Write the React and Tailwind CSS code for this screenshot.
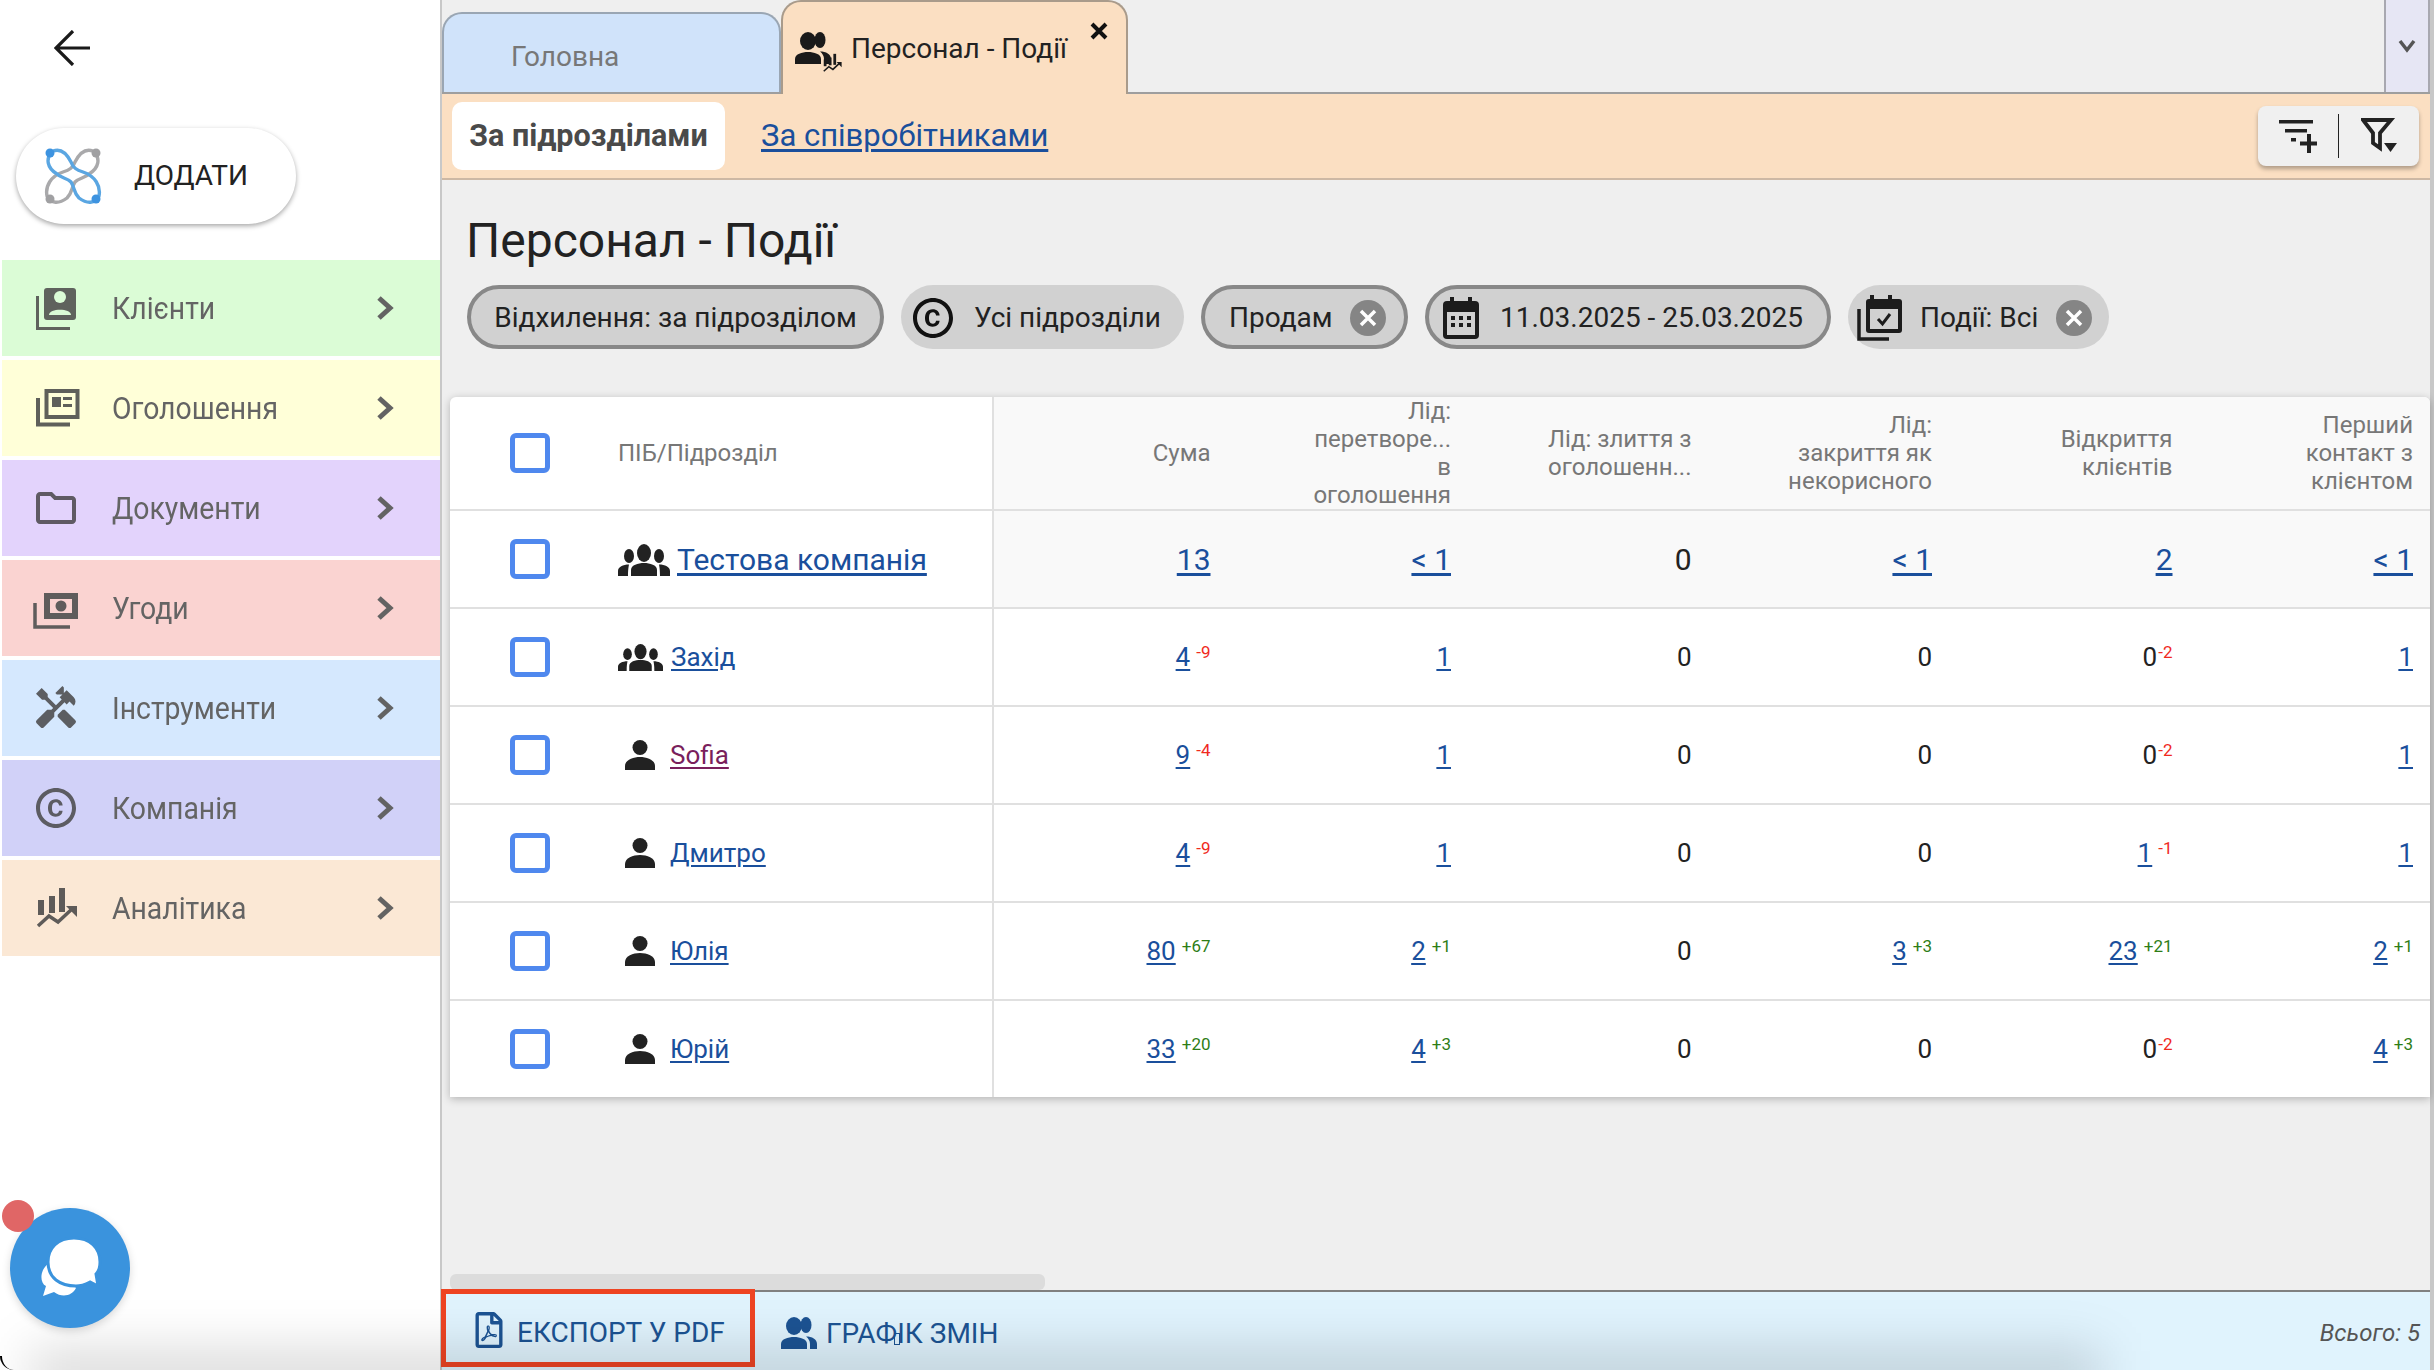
import React from "react";
import { MdOutlineFolder, MdHandyman, MdOutlineCopyright } from "react-icons/md";
import { FaRegFilePdf } from "react-icons/fa";

const Chevron = () => (
  <svg width="18" height="26" viewBox="0 0 18 26" className="shrink-0">
    <polyline points="3,3 14,13 3,23" fill="none" stroke="#636363" strokeWidth="5" />
  </svg>
);
const ClientsIcon = () => (
  <svg width="48" height="48" viewBox="0 0 48 48">
    <path d="M5.5 12 V44.5 H38" fill="none" stroke="#5f625d" strokeWidth="3" />
    <rect x="12" y="4" width="32" height="32" rx="3" fill="#5f625d" />
    <circle cx="28" cy="13" r="6" fill="#dbfcd6" />
    <path d="M17 31 C17 24 39 24 39 31 Z" fill="#dbfcd6" />
  </svg>
);
const AdsIcon = () => (
  <svg width="48" height="48" viewBox="0 0 48 48">
    <path d="M6 14 V40.5 H38" fill="none" stroke="#5f605a" strokeWidth="4" />
    <rect x="14.5" y="7" width="31" height="26" fill="none" stroke="#5f605a" strokeWidth="4" />
    <rect x="20" y="13" width="9" height="10" fill="#5f605a" />
    <rect x="31" y="13" width="9" height="3" fill="#5f605a" />
    <rect x="31" y="20" width="9" height="3" fill="#5f605a" />
  </svg>
);
const MoneyIcon = () => (
  <svg width="48" height="48" viewBox="0 0 48 48">
    <path d="M3 19 V43 H38" fill="none" stroke="#5f5c5c" strokeWidth="3.5" />
    <rect x="12" y="9" width="34" height="26" fill="#5f5c5c" />
    <path d="M18 15 H40 V29 H18 Z" fill="#fad3d1" />
    <circle cx="29" cy="22" r="5.5" fill="#5f5c5c" />
  </svg>
);
const ChartIcon = ({ size = 48, color = "#5e5b59" }) => (
  <svg width={size} height={size} viewBox="0 0 48 48">
    <rect x="6" y="16" width="6" height="15" fill={color} />
    <rect x="17" y="12" width="6" height="17" fill={color} />
    <rect x="27" y="4" width="6" height="24" fill={color} />
    <path d="M6 42 L17 32 L26 38 L40 25" fill="none" stroke={color} strokeWidth="3.5" />
    <path d="M34 22 H45 V33 Z" fill={color} />
  </svg>
);
const Person = ({ color = "#222", className = "" }) => (
  <svg width="30" height="30" viewBox="0 0 30 30" className={className}>
    <ellipse cx="15" cy="7.5" rx="7.5" ry="7.5" fill={color} />
    <path d="M0 30 V26 C0 20 8 17 15 17 C22 17 30 20 30 26 V30 Z" fill={color} />
  </svg>
);
const Group = ({ w, h }) => (
  <svg width={w} height={h} viewBox="0 0 52 32" preserveAspectRatio="none">
    <ellipse cx="26" cy="9" rx="7" ry="9" fill="#222" />
    <ellipse cx="11" cy="12" rx="5" ry="7" fill="#222" />
    <ellipse cx="41" cy="12" rx="5" ry="7" fill="#222" />
    <path d="M13 32 V26 C13 21 20 19 26 19 C32 19 39 21 39 26 V32 Z" fill="#222" />
    <path d="M0 32 V27 C0 23 5 20.5 11 20.5 C10.5 23 10 26 10 32 Z" fill="#222" />
    <path d="M52 32 V27 C52 23 47 20.5 41 20.5 C41.5 23 42 26 42 32 Z" fill="#222" />
  </svg>
);
const TwoPeople = ({ color, w = 36, h = 32 }) => (
  <svg width={w} height={h} viewBox="0 0 36 32">
    <ellipse cx="13" cy="9" rx="8" ry="9" fill={color} />
    <ellipse cx="25" cy="8" rx="5.5" ry="8" fill={color} />
    <path d="M0 32 V27 C0 22 7 20 13 20 C19 20 26 22 26 27 V32 Z" fill={color} />
    <path d="M25 19.5 C31 19.5 36 22 36 27 V32 H29 V27 C29 24 27.5 21.5 25 19.5 Z" fill={color} />
  </svg>
);
const ChipX = () => (
  <svg width="36" height="36" viewBox="0 0 36 36" className="shrink-0">
    <circle cx="18" cy="18" r="18" fill="#858585" />
    <path d="M11 11 L25 25 M25 11 L11 25" stroke="#fff" strokeWidth="3.5" />
  </svg>
);
const Calendar = () => (
  <svg width="38" height="42" viewBox="0 0 38 42" className="shrink-0">
    <rect x="8" y="0" width="4" height="8" fill="#1c1c1c" />
    <rect x="26" y="0" width="4" height="8" fill="#1c1c1c" />
    <rect x="1" y="4" width="36" height="38" rx="4" fill="#1c1c1c" />
    <rect x="5" y="15" width="28" height="23" fill="#d1d1d1" />
    {[9, 17, 25].map((x) => [19, 26].map((y) => <rect key={`${x}${y}`} x={x} y={y} width="4" height="4" fill="#1c1c1c" />))}
  </svg>
);
const CalendarCheck = () => (
  <svg width="46" height="46" viewBox="0 0 46 46" className="shrink-0">
    <path d="M2 14 V44 H32" fill="none" stroke="#1c1c1c" strokeWidth="3.5" />
    <rect x="13" y="0" width="4" height="8" fill="#1c1c1c" />
    <rect x="31" y="0" width="4" height="8" fill="#1c1c1c" />
    <rect x="9" y="4" width="36" height="34" rx="3" fill="#1c1c1c" />
    <rect x="13" y="14" width="28" height="20" fill="#d1d1d1" />
    <path d="M21 24 L25.5 29 L33 19" fill="none" stroke="#1c1c1c" strokeWidth="3" />
  </svg>
);
const Logo = () => (
  <svg width="60" height="60" viewBox="0 0 60 60" className="shrink-0">
    <g fill="none" strokeWidth="3.4">
      <path d="M50 5 C42 2 36 8 32 16 C30 22 26 24 20 26 C8 30 2 40 4 50 C8 58 16 58 24 52 C30 46 28 42 32 36 C36 32 42 32 46 28 C56 22 58 12 50 5" stroke="#a9a9ab" />
      <path d="M10 5 C18 2 24 8 28 16 C30 22 34 24 40 26 C52 30 58 40 56 50 C52 58 44 58 36 52 C30 46 32 42 28 36 C24 32 18 32 14 28 C4 22 2 12 10 5" stroke="#5aa6e2" />
    </g>
    <circle cx="7" cy="7" r="4.5" fill="#3d93e0" />
    <circle cx="53" cy="53" r="4.5" fill="#3d93e0" />
    <circle cx="53" cy="7" r="4.5" fill="#a0a0a2" />
    <circle cx="7" cy="53" r="4.5" fill="#a0a0a2" />
  </svg>
);

const menu = [
  ["Клієнти", "bg-[#dbfcd6]", <ClientsIcon />],
  ["Оголошення", "bg-[#ffffd8]", <AdsIcon />],
  ["Документи", "bg-[#e3d3fc]", <MdOutlineFolder size={48} color="#5f5a63" />],
  ["Угоди", "bg-[#fad3d1]", <MoneyIcon />],
  ["Інструменти", "bg-[#d5e8fe]", <MdHandyman size={48} color="#5c5e62" />],
  ["Компанія", "bg-[#d1d1f8]", <MdOutlineCopyright size={48} color="#5c5c62" />],
  ["Аналітика", "bg-[#fbe8d5]", <ChartIcon />],
];

const Num = ({ v, d, big, link = true, tight }) => (
  <div className={`flex justify-end items-center pr-[17px] ${big ? "text-[30px]" : "text-[26px]"}`}>
    {link ? (
      <a className="text-[#1a4f9c] underline underline-offset-[3px]" href="#">{v}</a>
    ) : (
      <span className="text-[#222]">{v}</span>
    )}
    {d && (
      <span className={`text-[17px] leading-[20px] mb-[11px] ${tight ? "ml-px" : "ml-[6px]"} ${d[0] === "+" ? "text-[#2e7d16]" : "text-[#f02a1e]"}`}>{d}</span>
    )}
  </div>
);

const rows = [
  { name: "Захід", type: "group", c: [["4", "-9"], ["1"], ["0", null, 0], ["0", null, 0], ["0", "-2", 0], ["1"]] },
  { name: "Sofia", visited: true, c: [["9", "-4"], ["1"], ["0", null, 0], ["0", null, 0], ["0", "-2", 0], ["1"]] },
  { name: "Дмитро", c: [["4", "-9"], ["1"], ["0", null, 0], ["0", null, 0], ["1", "-1"], ["1"]] },
  { name: "Юлія", c: [["80", "+67"], ["2", "+1"], ["0", null, 0], ["3", "+3"], ["23", "+21"], ["2", "+1"]] },
  { name: "Юрій", last: true, c: [["33", "+20"], ["4", "+3"], ["0", null, 0], ["0", null, 0], ["0", "-2", 0], ["4", "+3"]] },
];

const heads = [
  ["Сума"],
  ["Лід:", "перетворе...", "в", "оголошення"],
  ["Лід: злиття з", "оголошенн..."],
  ["Лід:", "закриття як", "некорисного"],
  ["Відкриття", "клієнтів"],
  ["Перший", "контакт з", "клієнтом"],
];

const Box = () => <div className="w-[40px] h-[40px] rounded-[6px] border-[5px] border-[#4f88ee] bg-white ml-[60px] shrink-0" />;
const GRID = "grid grid-cols-[544px_233.5px_repeat(5,240.5px)]";

export default function App() {
  return (
    <div className="relative flex w-[2434px] h-[1370px] overflow-hidden bg-white font-['Roboto',sans-serif]">
      {/* Sidebar */}
      <aside className="w-[440px] shrink-0 flex flex-col">
        <div className="pl-[54px] pt-[30px]">
          <svg width="36" height="36" viewBox="0 0 36 36" className="block">
            <path d="M36 18 H2 M19 1 L2 18 L19 35" fill="none" stroke="#1a1a1a" strokeWidth="3.2" />
          </svg>
        </div>
        <div className="mt-[62px] ml-[16px] w-[280px] h-[96px] rounded-full bg-white shadow-[0_2px_5px_rgba(0,0,0,0.35)] flex items-center pl-[27px]">
          <Logo />
          <span className="ml-[31px] text-[28px] text-[#222]">ДОДАТИ</span>
        </div>
        <nav className="mt-[36px] ml-[2px] flex flex-col gap-[4px]">
          {menu.map(([t, bg, icon]) => (
            <div key={t} className={`${bg} h-[96px] flex items-center pl-[30px] pr-[46px]`}>
              <span className="w-[48px] h-[48px] block shrink-0">{icon}</span>
              <span className="ml-[32px] mt-[2px] flex-1 text-[31px] text-[#646464] origin-left scale-x-[0.915]">{t}</span>
              <Chevron />
            </div>
          ))}
        </nav>
      </aside>

      {/* Main */}
      <main className="flex-1 min-w-0 flex flex-col bg-[#efefef] border-l-2 border-r-4 border-[#c8c8c8]">
        <div className="h-[94px] shrink-0 flex items-start border-b-2 border-[#9e9e9e]">
          <div className="w-[339px] h-[80px] mt-[12px] rounded-t-[20px] border-2 border-b-0 border-[#9aa6b3] bg-[#d0e3fa] flex items-center pt-[8px] pl-[67px] text-[28px] text-[#777]">
            Головна
          </div>
          <div className="relative w-[347px] h-[94px] rounded-t-[20px] border-2 border-b-0 border-[#a99b8b] bg-[#fbdfc2] flex items-start pl-[12px] pt-[30px] text-[28px] text-[#222] z-10">
            <span className="relative block w-[48px] h-[42px] shrink-0">
              <TwoPeople color="#1a1a1a" />
              <span className="absolute right-0 bottom-0"><ChartIcon size={22} color="#1a1a1a" /></span>
            </span>
            <span className="ml-[8px] leading-[34px]">Персонал - Події</span>
            <svg width="18" height="18" viewBox="0 0 18 18" className="absolute right-[18px] top-[20px]">
              <path d="M2 2 L16 16 M16 2 L2 16" stroke="#111" strokeWidth="4" />
            </svg>
          </div>
          <div className="ml-auto w-[46px] h-[92px] border-2 border-y-0 border-[#a8a8b0] bg-[#e6e6f4] flex items-center justify-center">
            <svg width="18" height="14" viewBox="0 0 18 14">
              <polyline points="2,2 9,11 16,2" fill="none" stroke="#555" strokeWidth="3.5" />
            </svg>
          </div>
        </div>

        <div className="h-[86px] shrink-0 bg-[#fbdfc2] border-b-2 border-[#cdb8a4] flex items-center pl-[10px] pr-[11px]">
          <div className="w-[273px] h-[68px] rounded-[10px] bg-white flex items-center justify-center text-[30.5px] font-bold text-[#4a4a4a]">
            За підрозділами
          </div>
          <a href="#" className="ml-[36px] text-[31px] text-[#1a4f9c] underline underline-offset-[3px]">За співробітниками</a>
          <div className="ml-auto w-[161px] h-[60px] rounded-[8px] bg-[#f0f0f0] shadow-[0_3px_4px_rgba(0,0,0,0.3)] flex items-center">
            <div className="w-[80px] flex justify-center">
              <svg width="38" height="34" viewBox="0 0 38 34">
                <rect x="0" y="1" width="34" height="3.5" fill="#222" />
                <rect x="6" y="10" width="22" height="3.5" fill="#222" />
                <rect x="12" y="19" width="5" height="3.5" fill="#222" />
                <path d="M30 15 V34 M21 24.5 H38" stroke="#222" strokeWidth="4" />
              </svg>
            </div>
            <div className="w-px h-[44px] bg-[#222]" />
            <div className="flex-1 flex justify-center">
              <svg width="36" height="36" viewBox="0 0 36 36">
                <path d="M2 2 H30 L19 15 V30 L12 25 V15 Z" fill="none" stroke="#222" strokeWidth="3.8" />
                <path d="M23 25 H36 L29.5 34 Z" fill="#222" />
              </svg>
            </div>
          </div>
        </div>

        <div className="flex-1 min-h-0 flex flex-col pl-[8px]">
          <h1 className="mt-[33px] ml-[16px] text-[48px] leading-[56px] font-normal text-[#222]">Персонал - Події</h1>
          <div className="mt-[16px] ml-[17px] flex gap-[17px] text-[28px] text-[#222]">
            <div className="w-[417px] h-[64px] pt-[1px] rounded-full bg-[#d1d1d1] border-4 border-[#888] flex items-center justify-center">Відхилення: за підрозділом</div>
            <div className="w-[283px] h-[64px] pt-[1px] rounded-full bg-[#d1d1d1] flex items-center pl-[8px]">
              <MdOutlineCopyright size={48} color="#111" className="shrink-0" />
              <span className="ml-[17px]">Усі підрозділи</span>
            </div>
            <div className="w-[207px] h-[64px] pt-[1px] rounded-full bg-[#d1d1d1] border-4 border-[#888] flex items-center pl-[24px]">
              <span>Продам</span>
              <span className="ml-auto mr-[18px]"><ChipX /></span>
            </div>
            <div className="w-[406px] h-[64px] pt-[1px] rounded-full bg-[#d1d1d1] border-4 border-[#888] flex items-center pl-[13px]">
              <Calendar />
              <span className="ml-[20px]">11.03.2025 - 25.03.2025</span>
            </div>
            <div className="w-[261px] h-[64px] pt-[1px] rounded-full bg-[#d1d1d1] flex items-center pl-[9px]">
              <CalendarCheck />
              <span className="ml-[17px]">Події: Всі</span>
              <span className="ml-auto mr-[17px]"><ChipX /></span>
            </div>
          </div>

          <div className="mt-[48px] w-[1980px] h-[700px] overflow-hidden bg-white rounded-t-[6px] shadow-[0_2px_8px_rgba(0,0,0,0.25)] relative">
            <div className={`${GRID} h-[114px] border-b-2 border-[#e0e0e0]`}>
              <div className="flex items-center border-r-2 border-[#e0e0e0]">
                <Box />
                <span className="ml-[68px] text-[24px] text-[#777]">ПІБ/Підрозділ</span>
              </div>
              {heads.map((lines, i) => (
                <div key={i} className="bg-[#f9f9f9] flex flex-col justify-center items-end pr-[17px] text-[24px] leading-[28px] text-[#777] text-right">
                  {lines.map((l, j) => <span key={j}>{l}</span>)}
                </div>
              ))}
            </div>
            <div className={`${GRID} h-[98px] border-b-2 border-[#e0e0e0]`}>
              <div className="flex items-center border-r-2 border-[#e0e0e0]">
                <Box />
                <span className="ml-[68px] mr-[7px] mt-[2px]"><Group w={52} h={32} /></span>
                <a href="#" className="text-[30px] text-[#1a4f9c] underline underline-offset-[3px]">Тестова компанія</a>
              </div>
              {[["13"], ["< 1"], ["0", null, 0], ["< 1"], ["2"], ["< 1"]].map(([v, , l], i) => (
                <div key={i} className="bg-[#f9f9f9] flex justify-end items-center"><div className="w-full"><Num v={v} big link={l !== 0} /></div></div>
              ))}
            </div>
            {rows.map((r) => (
              <div key={r.name} className={`${GRID} ${r.last ? "h-[96px]" : "h-[98px] border-b-2 border-[#e0e0e0]"}`}>
                <div className="flex items-center border-r-2 border-[#e0e0e0]">
                  <Box />
                  {r.type === "group" ? (
                    <span className="ml-[68px] mr-[8px]"><Group w={45} h={27} /></span>
                  ) : (
                    <span className="ml-[75px] mr-[15px]"><Person /></span>
                  )}
                  <a href="#" className={`text-[26px] underline underline-offset-[3px] ${r.visited ? "text-[#7a1f5c]" : "text-[#1a4f9c]"}`}>{r.name}</a>
                </div>
                {r.c.map(([v, d, l], i) => (
                  <div key={i} className="flex items-center"><div className="w-full"><Num v={v} d={d} link={l !== 0} tight={v === "0"} /></div></div>
                ))}
              </div>
            ))}
          </div>

          <div className="mt-auto w-[595px] h-[16px] rounded-[6px] bg-[#dcdcdc]" />
        </div>

        <div className="h-[80px] shrink-0 bg-[#e0f3fd] border-t-2 border-[#808080] flex items-start">
          <button className="-mt-[3px] -ml-px w-[314px] h-[78px] border-[5px] border-[#ee4423] flex items-center pt-[10px] pl-[25px] text-[28px] text-[#1c5393]">
            <FaRegFilePdf size={36} className="shrink-0 -mt-[6px]" />
            <span className="ml-[10px]">ЕКСПОРТ У PDF</span>
          </button>
          <div className="h-[78px] pt-[4px] flex items-center ml-[26px] text-[28px] text-[#1c5393]">
            <TwoPeople color="#1c5393" />
            <span className="relative ml-[9px] pt-[2px]">
              ГРАФІК ЗМІН
              <span className="absolute left-[68px] top-[22px] w-[6px] h-[12px] border border-[#1c5393]" />
            </span>
          </div>
          <div className="ml-auto mr-[10px] h-[78px] pt-[4px] flex items-center italic text-[24px] text-[#555]">Всього: 5</div>
        </div>
      </main>

      {/* soft shade along the bottom of the window */}
      <div className="absolute left-[30px] bottom-[-30px] w-[2070px] h-[50px] pointer-events-none bg-black/15 blur-[25px]" />
      <div className="absolute left-0 bottom-0 w-[14px] h-[14px] pointer-events-none border-l-2 border-black rounded-bl-[14px]" />

      {/* Chat bubble */}
      <div className="absolute left-[10px] top-[1208px] w-[120px] h-[120px] rounded-full bg-[#3a93dd] shadow-[0_3px_8px_rgba(0,0,0,0.15)] flex items-center justify-center">
        <svg width="120" height="120" viewBox="0 0 120 120">
          <path d="M46 52 C30 56 28 74 36 78 L33 88 L44 84 C52 90 62 88 66 80 Z" fill="#fff" />
          <path d="M64 30 C48 30 38 40 38 54 C38 70 50 78 66 78 C72 78 76 76 80 74 L88 78 L86 66 C90 62 90 58 90 54 C90 40 80 30 64 30 Z" fill="#fff" stroke="#3a93dd" strokeWidth="3" />
        </svg>
      </div>
      <div className="absolute left-[2px] top-[1200px] w-[32px] h-[32px] rounded-full bg-[#e06666]" />
    </div>
  );
}
